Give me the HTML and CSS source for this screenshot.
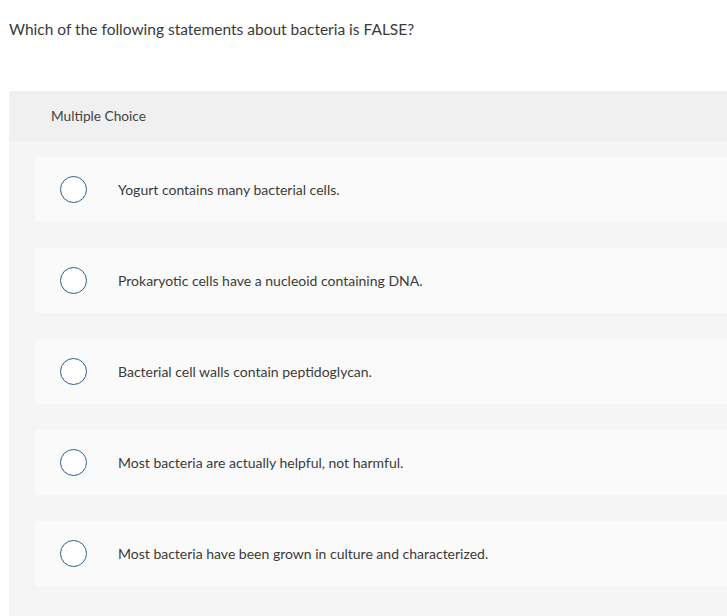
FILE: index.html
```html
<!DOCTYPE html>
<html>
<head>
<meta charset="utf-8">
<link rel="stylesheet" href="styles.css">
</head>
<body>
<div class="question">Which of the following statements about bacteria is FALSE?</div>
<div class="panel">
  <div class="panel-head">Multiple Choice</div>
  <div class="options">
    <div class="option"><span class="radio"></span><span class="label">Yogurt contains many bacterial cells.</span></div>
    <div class="option"><span class="radio"></span><span class="label">Prokaryotic cells have a nucleoid containing DNA.</span></div>
    <div class="option"><span class="radio"></span><span class="label">Bacterial cell walls contain peptidoglycan.</span></div>
    <div class="option"><span class="radio"></span><span class="label">Most bacteria are actually helpful, not harmful.</span></div>
    <div class="option"><span class="radio"></span><span class="label">Most bacteria have been grown in culture and characterized.</span></div>
  </div>
</div>
</body>
</html>
```
FILE: styles.css
```css
html, body {
  margin: 0;
  padding: 0;
  background: #ffffff;
  overflow: hidden;
}
body {
  font-family: Lato, "Liberation Sans", sans-serif;
  color: #333;
  padding-left: 9px;
}
.question {
  font-size: 15.5px;
  line-height: 20px;
  padding-top: 19px;
  height: 72px;
  color: #3a3a3a;
}
.panel {
  background: #f5f5f5;
  border-radius: 3px 0 0 0;
  height: 525px;
}
.panel-head {
  background: #f0f0f0;
  height: 50px;
  line-height: 50px;
  padding-left: 42px;
  font-size: 13.7px;
  color: #444;
  border-radius: 3px 0 0 0;
}
.options {
  padding: 16px 0 0 26px;
  display: flex;
  flex-direction: column;
  gap: 26px;
}
.option {
  background: #fafafa;
  height: 65px;
  border-radius: 3px 0 0 3px;
  display: flex;
  align-items: center;
  padding-left: 25px;
}
.radio {
  width: 25px;
  height: 25px;
  border: 1.5px solid #2d5e8e;
  border-radius: 50%;
  background: #fff;
  flex: none;
}
.label {
  margin-left: 31px;
  font-size: 14px;
  color: #3a3a3a;
}
```
